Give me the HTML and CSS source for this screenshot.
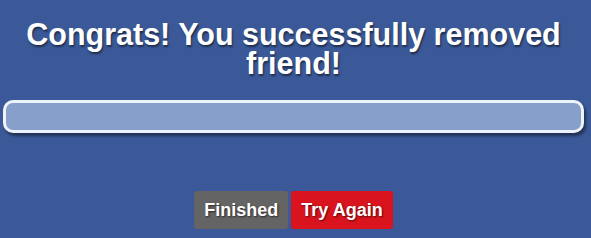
FILE: index.html
```html
<!DOCTYPE html>
<html lang="en">
<head>
  <meta charset="UTF-8">
  <title>Remove Friend</title>
  <link rel="stylesheet" href="styles.css">
</head>
<body>
  <div class="container">
    <h1>Congrats! You successfully removed friend!</h1>

    <div class="progress">
      <div class="progress-fill"></div>
    </div>

    <div class="actions">
      <button class="btn btn-finished">Finished</button>
      <button class="btn btn-retry">Try Again</button>
    </div>
  </div>
</body>
</html>
```

FILE: styles.css
```css
body {
  font-family: 'Liberation Sans', Arial, sans-serif;
  margin: 0;
  padding: 0;
  background-color: #3b5998;
}

.container {
  width: 591px;
  height: 238px;
  padding-top: 20px;
  box-sizing: border-box;
}

h1 {
  margin: 0 20px 0 16px;
  text-align: center;
  color: #ffffff;
  font-size: 30.5px;
  line-height: 29px;
  font-weight: bold;
  text-shadow: 1px 2px 2px rgba(0, 0, 0, 0.5);
}

.progress {
  margin: 22px 7px 0 3px;
  height: 27px;
  background: #879fcb;
  border: 3px solid #eef2fb;
  border-radius: 10px;
  box-shadow: 2px 3px 3px rgba(0, 0, 0, 0.45);
}

.actions {
  display: flex;
  justify-content: center;
  gap: 3px;
  margin-top: 58px;
  padding-right: 4px;
}

.btn {
  font-family: 'Liberation Sans', Arial, sans-serif;
  font-size: 18px;
  font-weight: bold;
  color: #ffffff;
  border: none;
  border-radius: 3px;
  height: 38px;
  padding: 0 10px;
  text-shadow: 1px 1px 2px rgba(0, 0, 0, 0.6);
}

.btn-finished {
  background-color: #646464;
}

.btn-retry {
  background-color: #d9141f;
}
```
